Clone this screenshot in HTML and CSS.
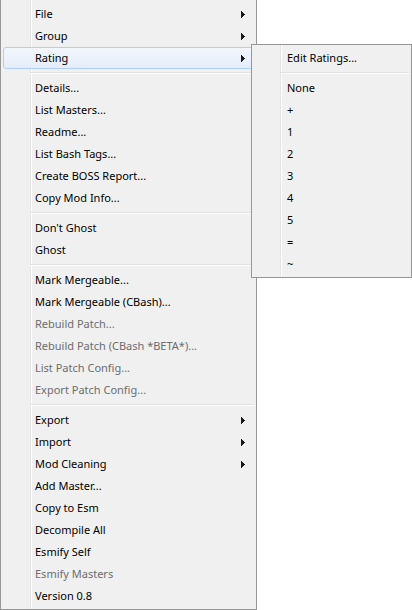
FILE: index.html
```html
<!DOCTYPE html>
<html>
<head>
<meta charset="utf-8">
<link rel="stylesheet" href="styles.css">
</head>
<body>
<div class="stage">
  <div class="menu main">
    <div class="item"><span>File</span><svg class="arrow" width="4" height="7" viewBox="0 0 4 7"><path d="M0 0h1v1h1v1h1v1h1v1h-1v1h-1v1h-1v1h-1z"/></svg></div>
    <div class="item"><span>Group</span><svg class="arrow" width="4" height="7" viewBox="0 0 4 7"><path d="M0 0h1v1h1v1h1v1h1v1h-1v1h-1v1h-1v1h-1z"/></svg></div>
    <div class="item active"><span>Rating</span><svg class="arrow" width="4" height="7" viewBox="0 0 4 7"><path d="M0 0h1v1h1v1h1v1h1v1h-1v1h-1v1h-1v1h-1z"/></svg></div>
    <div class="sep"></div>
    <div class="item"><span>Details...</span></div>
    <div class="item"><span>List Masters...</span></div>
    <div class="item"><span>Readme...</span></div>
    <div class="item"><span>List Bash Tags...</span></div>
    <div class="item"><span>Create BOSS Report...</span></div>
    <div class="item"><span>Copy Mod Info...</span></div>
    <div class="sep"></div>
    <div class="item"><span>Don't Ghost</span></div>
    <div class="item"><span>Ghost</span></div>
    <div class="sep"></div>
    <div class="item"><span>Mark Mergeable...</span></div>
    <div class="item"><span>Mark Mergeable (CBash)...</span></div>
    <div class="item disabled"><span>Rebuild Patch...</span></div>
    <div class="item disabled"><span>Rebuild Patch (CBash *BETA*)...</span></div>
    <div class="item disabled"><span>List Patch Config...</span></div>
    <div class="item disabled"><span>Export Patch Config...</span></div>
    <div class="sep"></div>
    <div class="item"><span>Export</span><svg class="arrow" width="4" height="7" viewBox="0 0 4 7"><path d="M0 0h1v1h1v1h1v1h1v1h-1v1h-1v1h-1v1h-1z"/></svg></div>
    <div class="item"><span>Import</span><svg class="arrow" width="4" height="7" viewBox="0 0 4 7"><path d="M0 0h1v1h1v1h1v1h1v1h-1v1h-1v1h-1v1h-1z"/></svg></div>
    <div class="item"><span>Mod Cleaning</span><svg class="arrow" width="4" height="7" viewBox="0 0 4 7"><path d="M0 0h1v1h1v1h1v1h1v1h-1v1h-1v1h-1v1h-1z"/></svg></div>
    <div class="item"><span>Add Master...</span></div>
    <div class="item"><span>Copy to Esm</span></div>
    <div class="item"><span>Decompile All</span></div>
    <div class="item"><span>Esmify Self</span></div>
    <div class="item disabled"><span>Esmify Masters</span></div>
    <div class="item"><span>Version 0.8</span></div>
  </div>
  <div class="menu sub">
    <div class="item"><span>Edit Ratings...</span></div>
    <div class="sep"></div>
    <div class="item"><span>None</span></div>
    <div class="item"><span>+</span></div>
    <div class="item"><span>1</span></div>
    <div class="item"><span>2</span></div>
    <div class="item"><span>3</span></div>
    <div class="item"><span>4</span></div>
    <div class="item"><span>5</span></div>
    <div class="item"><span>=</span></div>
    <div class="item"><span>~</span></div>
  </div>
</div>
</body>
</html>
```
FILE: styles.css
```css
html, body {
  margin: 0;
  padding: 0;
  background: #ffffff;
}
body {
  font-family: "Noto Sans", "DejaVu Sans", sans-serif;
  font-size: 11px;
  color: #000;
}
.stage {
  position: relative;
  width: 412px;
  height: 610px;
}
.menu {
  box-sizing: border-box;
  background-color: #f0f0f0;
  border: 1px solid #979797;
  padding: 2px;
  display: flex;
  flex-direction: column;
}
.main {
  width: 257px;
  height: 610px;
  border-top: 0;
  padding-top: 3px;
  background-image: linear-gradient(90deg, transparent 29px, #e2e3e3 29px, #e2e3e3 30px, #ffffff 30px, #ffffff 31px, transparent 31px);
}
.sub {
  position: absolute;
  left: 251px;
  top: 44px;
  width: 161px;
  height: 234px;
  background-image: linear-gradient(90deg, transparent 28px, #e2e3e3 28px, #e2e3e3 29px, #ffffff 29px, #ffffff 30px, transparent 30px);
}
.item {
  box-sizing: border-box;
  height: 22px;
  flex: none;
  display: flex;
  align-items: center;
  justify-content: space-between;
  padding: 0 8px 0 32px;
  line-height: 22px;
  white-space: nowrap;
  border: 1px solid transparent;
  border-radius: 3px;
}
.sub .item {
  padding-left: 33px;
}
.item span {
  margin-left: -1px;
}
.item.active {
  border-color: #aecff7;
  background: linear-gradient(#f2f7fd, #e4edf9);
}
.item.disabled {
  color: #6d6d6d;
}
.arrow {
  flex: none;
  fill: #1a1a1a;
  shape-rendering: crispEdges;
}
.sep {
  flex: none;
  height: 8px;
  margin-left: 27px;
  box-sizing: border-box;
  padding-top: 3px;
}
.sep::before {
  content: "";
  display: block;
  height: 1px;
  background: #e0e0e0;
  border-bottom: 1px solid #ffffff;
}
```
